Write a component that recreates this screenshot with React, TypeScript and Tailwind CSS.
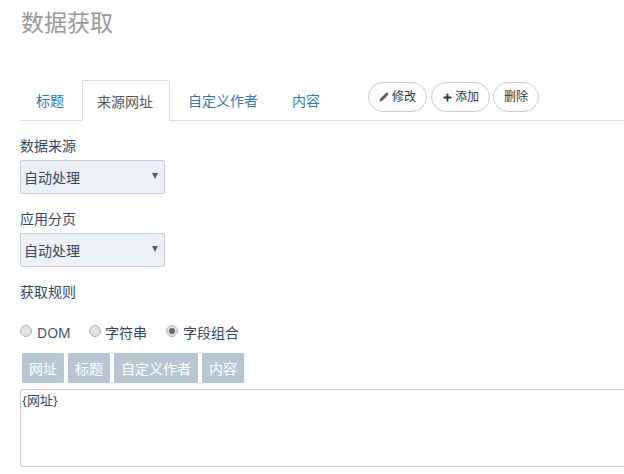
import { Plus, Pencil } from 'lucide-react'

const font = '[font-family:"Open_Sans","Noto_Sans_CJK_SC",sans-serif]'

function FakeSelect() {
  return (
    <div className="w-[145px] h-[34px] flex items-center justify-between pl-[3px] pr-[6px] bg-[#edf0f5] border border-[#c5cedf] rounded-[2px] text-[14px] text-[#34495e]">
      <span>自动处理</span>
      <span className="w-0 h-0 mb-[3px] border-x-[3px] border-x-transparent border-t-[6px] border-t-[#4a5f78]"></span>
    </div>
  )
}

function Radio({ checked, label, className }: { checked?: boolean; label: string; className: string }) {
  return (
    <div className={`flex items-center ${className}`}>
      <span className="w-[12px] h-[12px] rounded-full bg-[#e2e2e2] border border-[#b4b4b4] flex items-center justify-center mr-[5px] -mt-[3px]">
        {checked && <span className="w-[6px] h-[6px] rounded-full bg-[#666]"></span>}
      </span>
      <span>{label}</span>
    </div>
  )
}

export default function App() {
  const tags = ['网址', '标题', '自定义作者', '内容']

  return (
    <div className={`w-[624px] h-[474px] overflow-hidden bg-white pl-[20px] ${font}`}>
      <h1 className="pl-[1px] pt-[7px] h-[80px] text-[23px] leading-[30px] text-[#999]">数据获取</h1>

      <div className="flex h-[41px] border-b border-[#ddd] text-[14px]">
        <a className="h-[40px] px-[16px] mr-[2px] leading-[42px] text-[#337ab7]">标题</a>
        <a className="h-[41px] pl-[14px] pr-[16px] mr-[2px] leading-[42px] text-[#555] bg-white border border-b-white border-[#ddd]">来源网址</a>
        <a className="h-[40px] px-[16px] mr-[2px] leading-[42px] text-[#337ab7]">自定义作者</a>
        <a className="h-[40px] px-[16px] leading-[42px] text-[#337ab7]">内容</a>
        <div className="flex ml-[32px] mt-[2px] h-[30px] text-[12px] text-[#333]">
          <button className="w-[59px] h-[30px] mr-[4px] flex items-center justify-center gap-[3px] border border-[#ccc] rounded-full">
            <Pencil size={10} fill="#555" color="#555" strokeWidth={1.5} />
            修改
          </button>
          <button className="w-[59px] h-[30px] mr-[3px] flex items-center justify-center gap-[2px] border border-[#ccc] rounded-full">
            <Plus size={11} strokeWidth={4} />
            添加
          </button>
          <button className="w-[46px] h-[30px] flex items-center justify-center border border-[#ccc] rounded-full">删除</button>
        </div>
      </div>

      <div className="mt-[15px] text-[14px] leading-[20px] text-[#34495e]">数据来源</div>
      <div className="mt-[4px]"><FakeSelect /></div>

      <div className="mt-[15px] text-[14px] leading-[20px] text-[#34495e]">应用分页</div>
      <div className="mt-[4px]"><FakeSelect /></div>

      <div className="mt-[15px] text-[14px] leading-[20px] text-[#34495e]">获取规则</div>

      <div className="flex mt-[20px] h-[20px] items-center text-[14px] text-[#34495e]">
        <Radio label="DOM" className="w-[69px]" />
        <Radio label="字符串" className="w-[77px] [&>span:last-child]:-ml-[1px]" />
        <Radio checked label="字段组合" className="" />
      </div>

      <div className="flex gap-[4px] mt-[11px] ml-[2px]">
        {tags.map((tag) => (
          <span key={tag} className="h-[30px] px-[7px] leading-[31px] text-[14px] text-white bg-[#b8c5d3] rounded-[1px]">{tag}</span>
        ))}
      </div>

      <div className="mt-[6px] w-[620px] h-[78px] px-[1px] border border-[#c5cedf] rounded-[2px] text-[13px] leading-[20px] text-[#34495e]">{'{网址}'}</div>
    </div>
  )
}
